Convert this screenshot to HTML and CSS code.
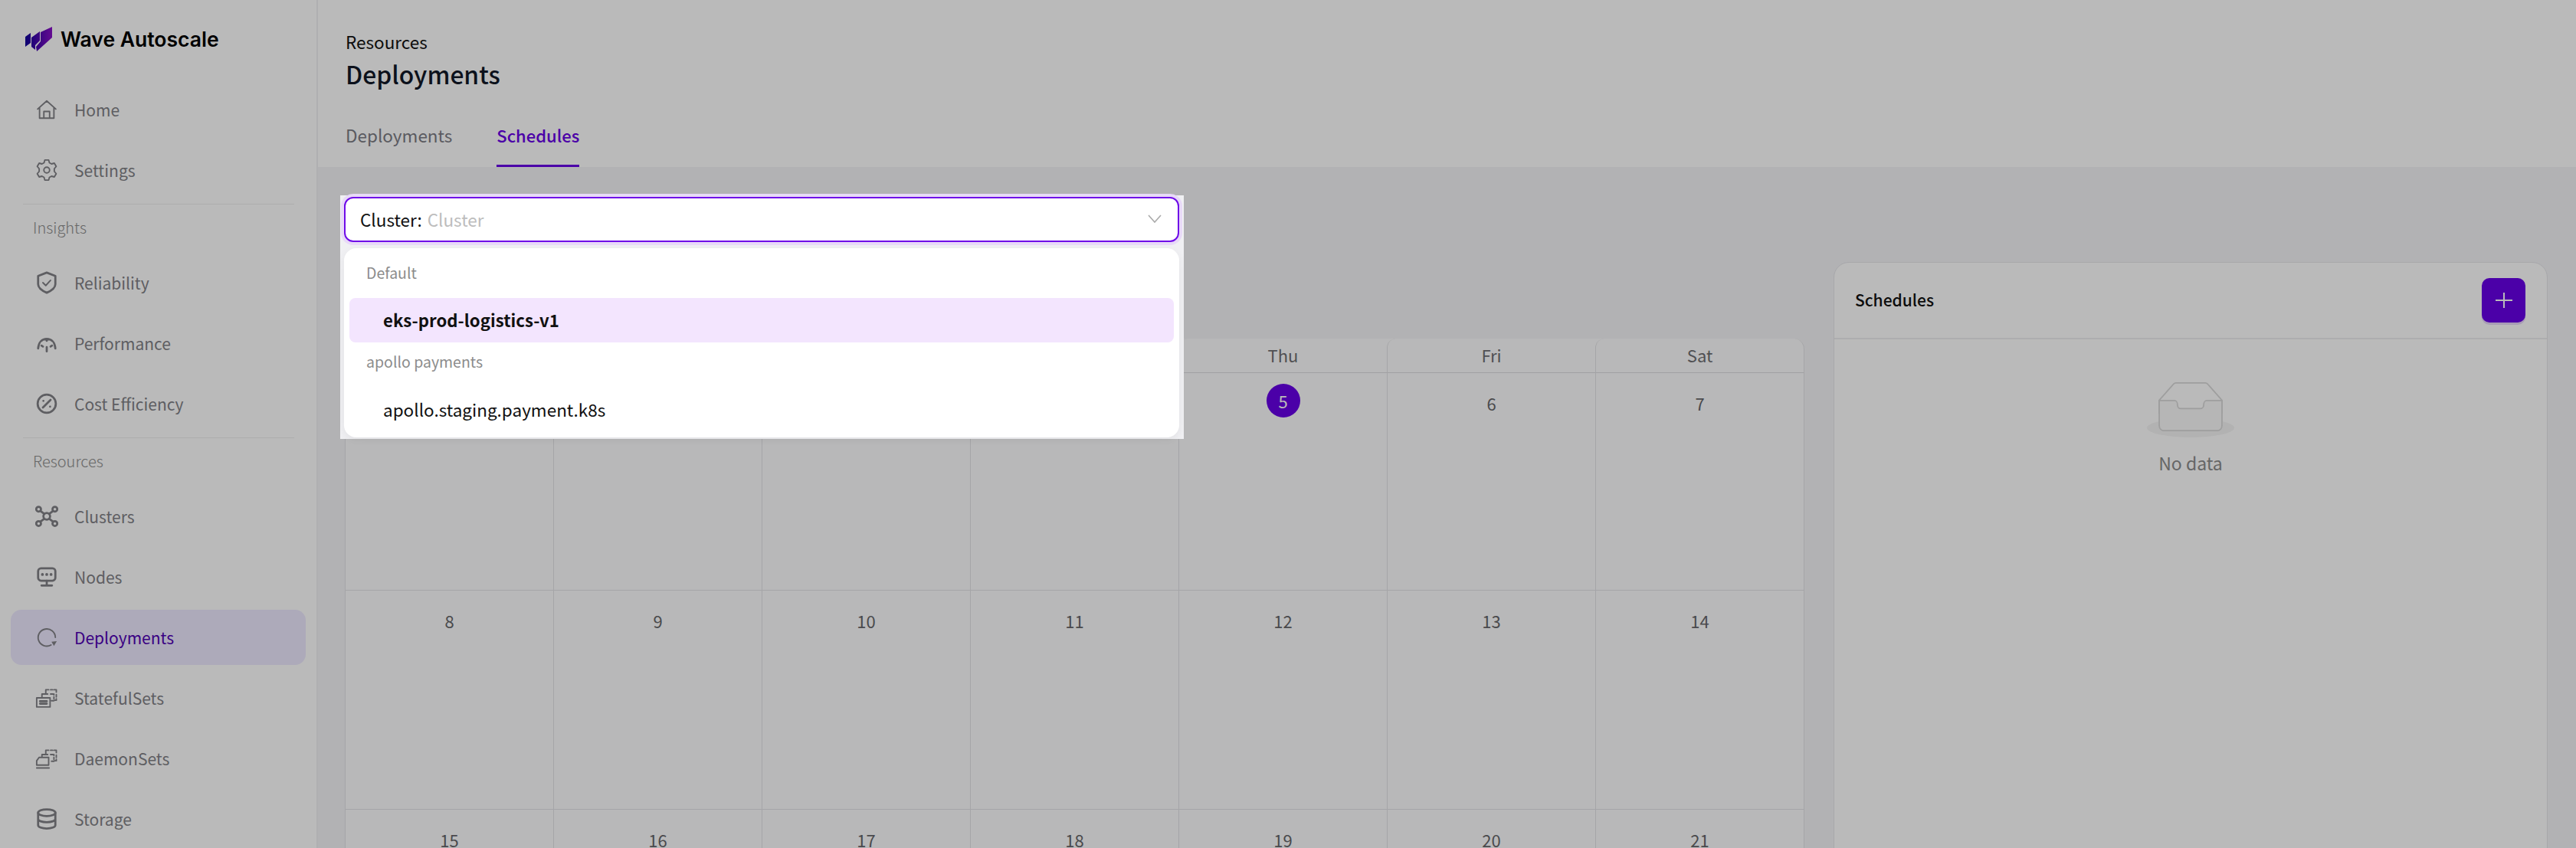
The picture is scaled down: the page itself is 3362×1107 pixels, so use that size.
FILE: index.html
```html
<!DOCTYPE html>
<html lang="en">
<head>
    <meta charset="UTF-8">
    <meta name="viewport" content="width=device-width, initial-scale=1.0">
    <title>Deployments - Wave Autoscale</title>
    <link rel="stylesheet" href="styles.css">
</head>
<body>
    <aside class="sidebar">
        <div class="brand">
            <svg class="brand-mark" viewBox="0 0 35 32">
                <defs>
                    <linearGradient id="wave" x1="0" y1="0" x2="1" y2="0">
                        <stop offset="0" stop-color="#10009a"/>
                        <stop offset="1" stop-color="#8a10c8"/>
                    </linearGradient>
                </defs>
                <path fill="url(#wave)" d="M0 13 7 8V21L0 26ZM8 14 19 6V18L13 24V30L8 26ZM20 7 35 0V14L15 32 14 26 20 19Z"/>
            </svg>
            <span class="brand-name">Wave Autoscale</span>
        </div>

        <nav class="nav">
            <a class="nav-item">
                <svg class="nav-icon" viewBox="0 0 24 24"><path d="M2.500 11.500 12 3l9.500 8.500M4.500 10v11h15V10M9 21v-7h6v7"/></svg>
                Home
            </a>
            <a class="nav-item">
                <svg class="nav-icon" viewBox="0 0 24 24"><circle cx="12" cy="12" r="3"/><path d="M10 1.500h4l.8 2.900 2.200 1.200 2.900-.8 2 3.400-2 2.400v2.800l2 2.400-2 3.400-2.900-.8-2.200 1.200-.8 2.900h-4l-.8-2.900-2.200-1.200-2.900.8-2-3.400 2-2.400v-2.800l-2-2.400 2-3.400 2.900.8 2.200-1.200z"/></svg>
                Settings
            </a>

            <hr class="nav-divider">
            <div class="nav-label">Insights</div>

            <a class="nav-item">
                <svg class="nav-icon" viewBox="0 0 24 24"><path class="thick" d="M12 1.500 21 5V13.500c0 3.500-3.500 6.500-9 9-5.500-2.500-9-5.500-9-9V5z"/><path d="m8 12 3 3 5-5.500"/></svg>
                Reliability
            </a>
            <a class="nav-item">
                <svg class="nav-icon" viewBox="0 0 24 24"><path class="thick" d="M3 17.500C3.500 11 7 7.500 12 7.500s8.500 3.500 9 10M6.500 14.500l1.500 1M17.500 14.500l-1.500 1M12 16v4.500M12 7.500v2"/></svg>
                Performance
            </a>
            <a class="nav-item">
                <svg class="nav-icon" viewBox="0 0 24 24"><circle class="thick" cx="12" cy="12" r="9.500"/><path class="thick" d="m8 16 8-8M8.500 9h.01M15.500 15h.01"/></svg>
                Cost Efficiency
            </a>

            <hr class="nav-divider">
            <div class="nav-label">Resources</div>

            <a class="nav-item">
                <svg class="nav-icon" viewBox="0 0 24 24"><g class="thick"><circle cx="12" cy="12" r="3.500"/><circle cx="3.500" cy="4.500" r="2.500"/><circle cx="20.500" cy="4.500" r="2.500"/><circle cx="3.500" cy="19.500" r="2.500"/><circle cx="20.500" cy="19.500" r="2.500"/><path d="m5.500 6.500 4 3M18.500 6.500l-4 3M5.500 17.500l4-3M18.500 17.500l-4-3"/></g></svg>
                Clusters
            </a>
            <a class="nav-item">
                <svg class="nav-icon" viewBox="0 0 24 24"><g class="thick"><rect x="3" y="3" width="18" height="13" rx="3"/><path d="M12 16v5M6.500 21h11"/></g><path class="fill" d="M6 9.500a1.500 1.500 0 0 0 3 0 1.500 1.500 0 0 0-3 0M10.500 9.500a1.500 1.500 0 0 0 3 0 1.500 1.500 0 0 0-3 0M15 9.500a1.500 1.500 0 0 0 3 0 1.500 1.500 0 0 0-3 0"/></svg>
                Nodes
            </a>
            <a class="nav-item active">
                <svg class="nav-icon" viewBox="0 0 24 24"><path d="M16.500 20A9 9 0 1 1 21 12"/><path class="fill" d="m17 16.500 5.500-.5-3 5z"/></svg>
                Deployments
            </a>
            <a class="nav-item">
                <svg class="nav-icon" viewBox="0 0 24 24"><path d="M1.500 12h14v9.500h-14zM7 12V8h6M16 8h2.500M19.500 8v1M19.500 11v2M19.500 15h-2.500M11 8V3.500h3M16 3.500h2M19.500 3.500h2.500V6M22 8.500v2.500M22 13v1.500h-2"/><path class="thick" d="M5 15.500h7M5 18h7"/></svg>
                StatefulSets
            </a>
            <a class="nav-item">
                <svg class="nav-icon" viewBox="0 0 24 24"><path d="M1.500 14.500 4 11h10v8H1.500zM1.500 22h13M7 11V8h6M16 8h2.500M19.500 8v1M19.500 11v2M19.500 15h-2.500M11 8V3.500h3M16 3.500h2M19.500 3.500h2.500V6M22 8.500v2.500M22 13v1.500h-2"/></svg>
                DaemonSets
            </a>
            <a class="nav-item">
                <svg class="nav-icon" viewBox="0 0 24 24"><g class="thick"><ellipse cx="12" cy="5.500" rx="9" ry="3.500"/><path d="M3 5.500v13C3 20.500 7 22 12 22s9-1.500 9-3.500v-13M3 12c0 2 4 3.500 9 3.500s9-1.500 9-3.500"/></g></svg>
                Storage
            </a>
        </nav>
    </aside>

    <main class="main">
        <header class="page-head">
            <div class="crumb">Resources</div>
            <h1 class="page-title">Deployments</h1>
            <div class="tabs">
                <a class="tab">Deployments</a>
                <a class="tab current">Schedules</a>
            </div>
        </header>

        <div class="content">
            <!-- first four columns of the header and first week sit behind the dropdown -->
            <section class="calendar">
                <div class="cal-head"></div>
                <div class="cal-head"></div>
                <div class="cal-head"></div>
                <div class="cal-head"></div>
                <div class="cal-head">Thu</div>
                <div class="cal-head">Fri</div>
                <div class="cal-head">Sat</div>

                <div class="cal-day"></div>
                <div class="cal-day"></div>
                <div class="cal-day"></div>
                <div class="cal-day"></div>
                <div class="cal-day"><span class="today">5</span></div>
                <div class="cal-day">6</div>
                <div class="cal-day">7</div>

                <div class="cal-day">8</div>
                <div class="cal-day">9</div>
                <div class="cal-day">10</div>
                <div class="cal-day">11</div>
                <div class="cal-day">12</div>
                <div class="cal-day">13</div>
                <div class="cal-day">14</div>

                <div class="cal-day">15</div>
                <div class="cal-day">16</div>
                <div class="cal-day">17</div>
                <div class="cal-day">18</div>
                <div class="cal-day">19</div>
                <div class="cal-day">20</div>
                <div class="cal-day">21</div>
            </section>

            <section class="panel">
                <div class="panel-head">
                    <span class="panel-title">Schedules</span>
                    <button class="add-button">
                        <svg viewBox="0 0 24 24"><path d="M12 2v20M1 12h22"/></svg>
                    </button>
                </div>
                <div class="empty">
                    <svg class="empty-art" viewBox="0 0 64 41">
                        <g transform="translate(0 1)" fill="none" fill-rule="evenodd">
                            <ellipse fill="#f5f5f5" cx="32" cy="33" rx="32" ry="7"/>
                            <g fill-rule="nonzero" stroke="#d9d9d9">
                                <path d="M55 12.760 44.854 1.258C44.367.474 43.656 0 42.907 0H21.093c-.749 0-1.460.474-1.947 1.257L9 12.761V22h46v-9.240z"/>
                                <path d="M41.613 15.931c0-1.605.994-2.930 2.227-2.931H55v18.137C55 33.260 53.680 35 52.050 35h-40.100C10.320 35 9 33.259 9 31.137V13h11.160c1.233 0 2.227 1.323 2.227 2.928v.022c0 1.605 1.005 2.901 2.237 2.901h14.752c1.232 0 2.237-1.308 2.237-2.913v-.007z" fill="#fafafa"/>
                            </g>
                        </g>
                    </svg>
                    <p class="empty-text">No data</p>
                </div>
            </section>
        </div>
    </main>

    <div class="mask"></div>

    <!-- the tour spotlight: this part stays above the mask -->
    <div class="spot">
        <div class="select">
            <span class="select-label">Cluster:</span>
            <span class="select-placeholder">Cluster</span>
            <svg class="select-arrow" viewBox="0 0 18 11"><path d="M1 1l8 9 8-9"/></svg>
        </div>
        <div class="dropdown">
            <div class="group-label">Default</div>
            <div class="option selected">eks-prod-logistics-v1</div>
            <div class="group-label">apollo payments</div>
            <div class="option">apollo.staging.payment.k8s</div>
        </div>
    </div>
</body>
</html>
```

FILE: styles.css
```css
* {
    box-sizing: border-box;
}
body {
    font-family: "Noto Sans CJK KR", "Noto Sans", sans-serif;
    font-size: 22.500px;
    margin: 0;
    height: 1107px;
    overflow: hidden;
    display: flex;
    background-color: #f4f4f7;
    color: #111;
}

/* sidebar */
.sidebar {
    width: 415px;
    flex-shrink: 0;
    background: #fff;
    border-right: 2px solid #f0f0f3;
}
.brand {
    display: flex;
    align-items: center;
    gap: 11px;
    height: 102px;
    padding-left: 33px;
}
.brand-mark {
    width: 35px;
    height: 32px;
}
.brand-name {
    font-family: Inter, sans-serif;
    font-weight: 600;
    font-size: 26.500px;
    color: #000;
}
.nav {
    padding: 5px 14px 0;
    display: flex;
    flex-direction: column;
    gap: 7px;
}
.nav-item {
    display: flex;
    align-items: center;
    gap: 21px;
    height: 72px;
    padding-left: 32px;
    border-radius: 14px;
    font-size: 21px;
    color: #828287;
    flex-shrink: 0;
}
.nav-item.active {
    background: #ede9ff;
    color: #5000b4;
}
.nav-icon {
    width: 30px;
    height: 30px;
    fill: none;
    stroke: #828287;
    stroke-width: 1.500;
    stroke-linejoin: round;
    stroke-linecap: round;
    flex-shrink: 0;
}
.nav-icon .thick {
    stroke-width: 2.200;
}
.nav-icon .fill {
    fill: #828287;
    stroke: none;
}
.nav-divider {
    border: 0;
    border-top: 1px solid #eeeeee;
    margin: 1px 16px 0;
    width: 354px;
}
.nav-label {
    font-size: 20px;
    font-weight: 300;
    color: #8e8e8e;
    padding-left: 29px;
    height: 52px;
    line-height: 46px;
}

/* page header */
.main {
    flex: 1;
    min-width: 0;
}
.page-head {
    height: 218px;
    background: #fff;
    padding: 36px 36px 0;
}
.crumb {
    line-height: 36px;
}
.page-title {
    font-size: 31.800px;
    font-weight: 500;
    line-height: 48px;
    margin: 0;
    color: #111827;
}
.tabs {
    display: flex;
    gap: 58px;
    margin-top: 26px;
}
.tab {
    height: 72px;
    line-height: 60px;
    color: #7c7c84;
}
.tab.current {
    color: #6700e6;
    font-weight: 500;
    font-size: 22px;
    border-bottom: 3px solid #6700e6;
}

/* schedules area */
.content {
    display: grid;
    grid-template-columns: 1905fr 932fr;
    gap: 38px;
    padding: 124px 37px 0 35px;
}
.calendar {
    margin-top: 100px;
    display: grid;
    grid-template-columns: repeat(7, 1fr);
    grid-auto-rows: 286px;
    grid-template-rows: 45px 284px;
    background: #fdfdfe;
    border-right: 1px solid #e3e3e6;
    border-radius: 14px 14px 0 0;
}
.cal-head {
    text-align: center;
    line-height: 42px;
    font-size: 22px;
    color: #6e6e72;
    border-bottom: 1px solid #dcdce0;
    border-left: 1px solid #e3e3e6;
    border-radius: 12px 12px 0 0;
}
.cal-day {
    text-align: center;
    font-size: 22px;
    color: #66666a;
    line-height: 44px;
    padding-top: 17px;
    border-bottom: 1px solid #e3e3e6;
    border-left: 1px solid #e3e3e6;
}
.today {
    display: block;
    width: 44px;
    height: 44px;
    margin: -3px auto 0;
    border-radius: 50%;
    background: #6700e6;
    color: #fff;
}
.panel {
    background: #fff;
    border: 1px solid #e6e6ea;
    border-radius: 20px 20px 0 0;
    height: 900px;
}
.panel-head {
    height: 100px;
    display: flex;
    align-items: center;
    justify-content: space-between;
    padding: 0 28px;
    border-bottom: 2px solid #eeeef0;
}
.panel-title {
    font-size: 21px;
    font-weight: 500;
    margin-left: -1px;
    padding-bottom: 2px;
}
.add-button {
    width: 57px;
    height: 58px;
    border: none;
    border-radius: 10px;
    background: #6700e6;
    box-shadow: 0 3px 0 #e6d8f8;
    display: flex;
    align-items: center;
    justify-content: center;
    padding: 0;
}
.add-button svg {
    width: 24px;
    height: 24px;
    fill: none;
    stroke: #fff;
    stroke-width: 2;
}
.empty {
    display: flex;
    flex-direction: column;
    align-items: center;
    padding-top: 55px;
}
.empty-art {
    width: 114px;
    height: 73px;
}
.empty-text {
    margin: 15px 0 0;
    font-size: 23px;
    line-height: 36px;
    color: #8c8c8c;
}

/* overlay */
.mask {
    position: fixed;
    inset: 0;
    background: rgba(0, 0, 0, 0.27);
}
.spot {
    position: fixed;
    left: 444px;
    top: 255px;
    width: 1101px;
    height: 318px;
    background: #f0f0f3;
    padding: 2px 6px 2px 5px;
}
.select {
    display: flex;
    align-items: center;
    gap: 7px;
    height: 59px;
    padding: 0 20px 2px 19px;
    background: #fff;
    border: 2px solid #6f0ce8;
    border-radius: 12px;
    box-shadow: 0 0 0 4px #e8d9f8;
}
.select-placeholder {
    color: #bdbdbd;
}
.select-arrow {
    width: 18px;
    height: 11px;
    margin-left: auto;
    margin-right: 1px;
    fill: none;
    stroke: #aaaaaa;
    stroke-width: 1.600;
}
.dropdown {
    margin-top: 8px;
    height: 247px;
    background: #fff;
    border-radius: 16px;
    padding: 0 7px;
    box-shadow: 0 4px 12px rgba(0, 0, 0, 0.06);
}
.group-label {
    font-size: 19.500px;
    color: #8c8c8c;
    padding-left: 22px;
    height: 65px;
    line-height: 64px;
}
.group-label + .option + .group-label {
    height: 52px;
    line-height: 50px;
}
.option {
    height: 58px;
    line-height: 56px;
    padding-left: 44px;
    border-radius: 8px;
}
.group-label + .option + .group-label + .option {
    margin-top: 7px;
}
.option.selected {
    background: #f3e5fe;
    font-size: 22.200px;
    font-weight: 600;
}
```
